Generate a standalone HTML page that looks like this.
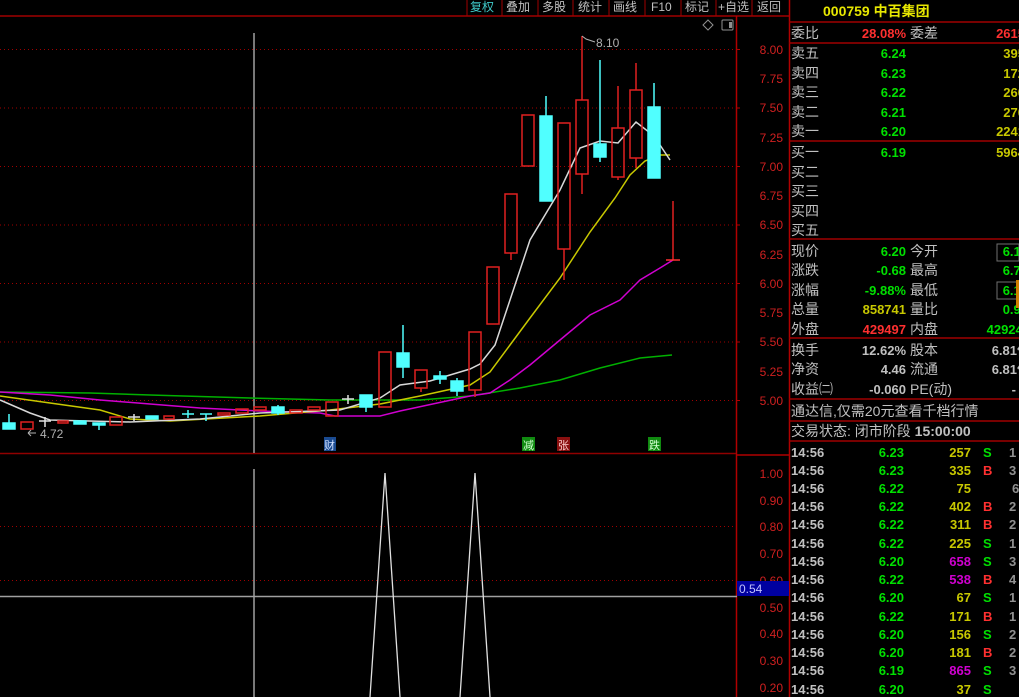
<!DOCTYPE html>
<html><head><meta charset="utf-8">
<style>
html,body{margin:0;padding:0;background:#000;}
body{width:1019px;height:697px;overflow:hidden;position:relative;font-family:"Liberation Sans","Noto Sans CJK SC",sans-serif;}
svg{position:absolute;left:0;top:0;}
svg text{font-family:"Liberation Sans","Noto Sans CJK SC",sans-serif;}
</style></head><body>
<svg width="1019" height="697" viewBox="0 0 1019 697" xmlns="http://www.w3.org/2000/svg">
<!-- top bar -->
<line x1="0" y1="16" x2="789" y2="16" stroke="#a00000" stroke-width="1.5"/>
<g font-size="12" fill="#c0c0c0">
<text x="470" y="11" fill="#3fc8c8">复权</text>
<text x="506" y="11">叠加</text>
<text x="542" y="11">多股</text>
<text x="578" y="11">统计</text>
<text x="613" y="11">画线</text>
<text x="651" y="11">F10</text>
<text x="685" y="11">标记</text>
<text x="718" y="11">+自选</text>
<text x="757" y="11">返回</text>
</g>
<g stroke="#a00000" stroke-width="1">
<line x1="467" y1="0" x2="467" y2="16"/><line x1="502" y1="0" x2="502" y2="16"/><line x1="538" y1="0" x2="538" y2="16"/><line x1="573" y1="0" x2="573" y2="16"/><line x1="609" y1="0" x2="609" y2="16"/><line x1="645" y1="0" x2="645" y2="16"/><line x1="681" y1="0" x2="681" y2="16"/><line x1="716" y1="0" x2="716" y2="16"/><line x1="752" y1="0" x2="752" y2="16"/>
</g>
<!-- icons -->
<path d="M708 20 L713 25 L708 30 L703 25 Z" fill="none" stroke="#909090" stroke-width="1"/>
<rect x="722" y="20" width="11" height="10" rx="1" fill="none" stroke="#909090"/>
<rect x="729" y="22" width="3" height="6" fill="#909090"/>
<!-- axes -->
<line x1="736.5" y1="16" x2="736.5" y2="697" stroke="#b00000" stroke-width="1.5"/>
<line x1="789.5" y1="0" x2="789.5" y2="697" stroke="#b00000" stroke-width="1.5"/>
<line x1="0" y1="453.5" x2="736" y2="453.5" stroke="#900000" stroke-width="1.5"/>
<line x1="736" y1="455" x2="789" y2="455" stroke="#b00000" stroke-width="1.5"/>
<!-- dotted grid -->
<g stroke="#a00000" stroke-width="1" stroke-dasharray="1,3">
<line x1="0" y1="49.5" x2="736" y2="49.5"/><line x1="0" y1="108" x2="736" y2="108"/><line x1="0" y1="166.5" x2="736" y2="166.5"/><line x1="0" y1="225" x2="736" y2="225"/><line x1="0" y1="283.5" x2="736" y2="283.5"/><line x1="0" y1="342" x2="736" y2="342"/><line x1="0" y1="400.5" x2="736" y2="400.5"/>
<line x1="0" y1="526.5" x2="736" y2="526.5"/><line x1="0" y1="580.5" x2="736" y2="580.5"/>
</g>
<!-- axis labels -->
<g font-size="12" fill="#d02020" text-anchor="end">
<text x="783" y="54">8.00</text><text x="783" y="83">7.75</text><text x="783" y="112">7.50</text><text x="783" y="142">7.25</text><text x="783" y="171">7.00</text><text x="783" y="200">6.75</text><text x="783" y="229">6.50</text><text x="783" y="259">6.25</text><text x="783" y="288">6.00</text><text x="783" y="317">5.75</text><text x="783" y="346">5.50</text><text x="783" y="376">5.25</text><text x="783" y="405">5.00</text>
<text x="783" y="478">1.00</text><text x="783" y="505">0.90</text><text x="783" y="531">0.80</text><text x="783" y="558">0.70</text><text x="783" y="585">0.60</text><text x="783" y="612">0.50</text><text x="783" y="638">0.40</text><text x="783" y="665">0.30</text><text x="783" y="692">0.20</text>
</g>
<g stroke="#b00000">
<line x1="736" y1="49.5" x2="740" y2="49.5"/><line x1="736" y1="108" x2="740" y2="108"/><line x1="736" y1="166.5" x2="740" y2="166.5"/><line x1="736" y1="225" x2="740" y2="225"/><line x1="736" y1="283.5" x2="740" y2="283.5"/><line x1="736" y1="342" x2="740" y2="342"/><line x1="736" y1="400.5" x2="740" y2="400.5"/>
</g>
<rect x="737" y="581" width="52" height="15" fill="#0000a0"/>
<text x="739" y="593" font-size="12" fill="#c0c0ff">0.54</text>
<line x1="0" y1="596.5" x2="737" y2="596.5" stroke="#a0a0a0" stroke-width="1.5"/>
<!-- vertical cursor -->
<line x1="254" y1="33" x2="254" y2="453" stroke="#a0a0a0" stroke-width="1.5"/>
<line x1="254" y1="469" x2="254" y2="697" stroke="#a0a0a0" stroke-width="1.5"/>
<!-- MAs -->
<polyline fill="none" stroke="#00b000" stroke-width="1.5" points="0,392 90,393 150,395 250,398 330,400 420,400 470,396 520,388 560,380 600,368 640,358 672,355"/>
<polyline fill="none" stroke="#d000d0" stroke-width="1.5" points="0,392 50,395 100,400 150,404 200,408 260,411 320,413 335,416 380,416 400,411 470,396 490,393 510,380 530,365 560,340 590,315 620,300 640,280 660,268 673,260"/>
<polyline fill="none" stroke="#c8c800" stroke-width="1.5" points="0,396 50,403 100,410 130,419 170,421 260,416 330,410 380,404 420,396 470,385 490,372 510,345 530,318 560,278 590,232 615,198 630,175 645,161 660,155 670,155"/>
<polyline fill="none" stroke="#d8d8d8" stroke-width="1.5" points="0,400 30,413 50,420 130,422 200,419 260,413 340,410 380,398 400,385 430,381 470,369 480,364 495,345 510,300 530,240 560,190 580,148 600,141 618,143 636,122 654,136 670,160"/>
<!-- candles: red hollow -->
<g fill="none" stroke="#e02020" stroke-width="1.5">
<rect x="21" y="422" width="12" height="7"/>
<rect x="58" y="421" width="10" height="2"/>
<rect x="110" y="417" width="12" height="8"/>
<rect x="164" y="416" width="10" height="3"/>
<rect x="218" y="413" width="12" height="2"/>
<rect x="236" y="409" width="12" height="4"/>
<rect x="254" y="407" width="12" height="3"/>
<rect x="290" y="410" width="12" height="3"/>
<rect x="308" y="407" width="12" height="3"/>
<rect x="326" y="402" width="12" height="14"/>
<rect x="379" y="352" width="12" height="55"/>
<rect x="415" y="370" width="12" height="18"/>
<rect x="469" y="332" width="12" height="58"/>
<rect x="487" y="267" width="12" height="57"/>
<rect x="505" y="194" width="12" height="59"/>
<rect x="522" y="115" width="12" height="51"/>
<rect x="558" y="123" width="12" height="126"/>
<rect x="576" y="100" width="12" height="74"/>
<rect x="612" y="128" width="12" height="49"/>
<rect x="630" y="90" width="12" height="68"/>
</g>
<g stroke="#e02020" stroke-width="1.5">
<line x1="421" y1="388" x2="421" y2="392"/>
<line x1="475" y1="390" x2="475" y2="397"/>
<line x1="511" y1="253" x2="511" y2="260"/>
<line x1="564" y1="249" x2="564" y2="280"/>
<line x1="582" y1="36" x2="582" y2="100"/><line x1="582" y1="174" x2="582" y2="194"/>
<line x1="618" y1="86" x2="618" y2="128"/><line x1="618" y1="177" x2="618" y2="180"/>
<line x1="636" y1="63" x2="636" y2="90"/><line x1="636" y1="158" x2="636" y2="168"/>
<line x1="673" y1="201" x2="673" y2="260"/>
<line x1="666" y1="260" x2="680" y2="260" stroke="#ff3030"/>
</g>
<!-- cyan candles -->
<g fill="#50ffff" stroke="#50ffff" stroke-width="1.5">
<rect x="3" y="423" width="12" height="6"/><line x1="9" y1="414" x2="9" y2="423"/>
<rect x="74" y="421" width="12" height="3"/>
<rect x="93" y="423" width="12" height="2"/><line x1="99" y1="425" x2="99" y2="430"/>
<rect x="146" y="416" width="12" height="3"/>
<line x1="182" y1="414" x2="194" y2="414"/><line x1="188" y1="410" x2="188" y2="418"/>
<line x1="200" y1="414" x2="212" y2="414"/><line x1="206" y1="414" x2="206" y2="421"/>
<rect x="272" y="407" width="12" height="6"/><line x1="278" y1="405" x2="278" y2="415"/>
<rect x="360" y="395" width="12" height="12"/><line x1="366" y1="407" x2="366" y2="412"/>
<rect x="397" y="353" width="12" height="14"/><line x1="403" y1="325" x2="403" y2="378"/>
<rect x="434" y="376" width="12" height="3"/><line x1="440" y1="371" x2="440" y2="384"/>
<rect x="451" y="381" width="12" height="10"/><line x1="457" y1="378" x2="457" y2="396"/>
<rect x="540" y="116" width="12" height="85"/><line x1="546" y1="96" x2="546" y2="116"/>
<rect x="594" y="144" width="12" height="13"/><line x1="600" y1="60" x2="600" y2="162"/>
<rect x="648" y="107" width="12" height="71"/><line x1="654" y1="83" x2="654" y2="107"/>
</g>
<!-- white doji -->
<g stroke="#e0e0e0" stroke-width="1.5">
<line x1="39" y1="421" x2="51" y2="421"/><line x1="45" y1="417" x2="45" y2="427"/>
<line x1="128" y1="417" x2="140" y2="417"/><line x1="134" y1="414" x2="134" y2="421"/>
<line x1="342" y1="399" x2="354" y2="399"/><line x1="348" y1="395" x2="348" y2="404"/>
</g>
<!-- annotations -->
<path d="M582 36 L586 39 L595 42" fill="none" stroke="#b0b0b0"/>
<text x="596" y="47" font-size="12" fill="#b0b0b0">8.10</text>
<path d="M36 433 L28 433 M28 433 L31 430 M28 433 L31 436" fill="none" stroke="#b0b0b0"/>
<text x="40" y="438" font-size="12" fill="#b0b0b0">4.72</text>
<!-- badges -->
<rect x="324" y="437" width="12" height="14" fill="#1a4a90"/><text x="324" y="449" font-size="11" fill="#d0e0ff">财</text>
<rect x="522" y="437" width="13" height="14" fill="#108a10"/><text x="523" y="449" font-size="11" fill="#d0ffd0">减</text>
<rect x="557" y="437" width="13" height="14" fill="#8a1010"/><text x="558" y="449" font-size="11" fill="#ffd0d0">张</text>
<rect x="648" y="437" width="13" height="14" fill="#108a10"/><text x="649" y="449" font-size="11" fill="#d0ffd0">跌</text>
<!-- lower indicator -->
<polyline fill="none" stroke="#e0e0e0" stroke-width="1.3" points="370,697 385,473 400,697"/>
<polyline fill="none" stroke="#e0e0e0" stroke-width="1.3" points="460,697 475,473 490,697"/>

<!-- right panel -->
<g stroke="#a00000" stroke-width="1.5">
<line x1="789" y1="22" x2="1019" y2="22"/><line x1="789" y1="43" x2="1019" y2="43"/><line x1="789" y1="141" x2="1019" y2="141"/><line x1="789" y1="239" x2="1019" y2="239"/><line x1="789" y1="338" x2="1019" y2="338"/><line x1="789" y1="399" x2="1019" y2="399"/><line x1="789" y1="421" x2="1019" y2="421"/><line x1="789" y1="441" x2="1019" y2="441"/>
</g>
<text x="823" y="16" font-size="14" font-weight="bold" fill="#e8e800">000759 中百集团</text>
<g font-size="14" fill="#c0c0c0">
<text x="791" y="38">委比</text><text x="910" y="38">委差</text>
<text x="791" y="58">卖五</text><text x="791" y="78">卖四</text><text x="791" y="97">卖三</text><text x="791" y="117">卖二</text><text x="791" y="136">卖一</text>
<text x="791" y="157">买一</text><text x="791" y="177">买二</text><text x="791" y="196">买三</text><text x="791" y="216">买四</text><text x="791" y="235">买五</text>
<text x="791" y="256">现价</text><text x="910" y="256">今开</text>
<text x="791" y="275">涨跌</text><text x="910" y="275">最高</text>
<text x="791" y="295">涨幅</text><text x="910" y="295">最低</text>
<text x="791" y="314">总量</text><text x="910" y="314">量比</text>
<text x="791" y="334">外盘</text><text x="910" y="334">内盘</text>
<text x="791" y="355">换手</text><text x="910" y="355">股本</text>
<text x="791" y="374">净资</text><text x="910" y="374">流通</text>
<text x="791" y="394">收益㈡</text><text x="910" y="394">PE(动)</text>
<text x="791" y="416">通达信,仅需20元查看千档行情</text>
<text x="791" y="436">交易状态: 闭市阶段 <tspan font-weight="bold">15:00:00</tspan></text>
</g>
<g font-size="13" font-weight="bold" text-anchor="end">
<text x="906" y="38" fill="#ff3030">28.08%</text><text x="1025" y="38" fill="#ff3030">2615</text>
<text x="906" y="58" fill="#00e000">6.24</text><text x="1025" y="58" fill="#c8c800">395</text>
<text x="906" y="78" fill="#00e000">6.23</text><text x="1025" y="78" fill="#c8c800">172</text>
<text x="906" y="97" fill="#00e000">6.22</text><text x="1025" y="97" fill="#c8c800">260</text>
<text x="906" y="117" fill="#00e000">6.21</text><text x="1025" y="117" fill="#c8c800">270</text>
<text x="906" y="136" fill="#00e000">6.20</text><text x="1025" y="136" fill="#c8c800">2241</text>
<text x="906" y="157" fill="#00e000">6.19</text><text x="1025" y="157" fill="#c8c800">5964</text>
<text x="906" y="256" fill="#00e000">6.20</text><text x="1028" y="256" fill="#00e000">6.19</text>
<text x="906" y="275" fill="#00e000">-0.68</text><text x="1028" y="275" fill="#00e000">6.71</text>
<text x="906" y="295" fill="#00e000">-9.88%</text><text x="1028" y="295" fill="#00e000">6.19</text>
<text x="906" y="314" fill="#c8c800">858741</text><text x="1028" y="314" fill="#00e000">0.93</text>
<text x="906" y="334" fill="#ff3030">429497</text><text x="1030" y="334" fill="#00e000">429244</text>
<text x="906" y="355" fill="#c0c0c0">12.62%</text><text x="1030" y="355" fill="#c0c0c0">6.81亿</text>
<text x="906" y="374" fill="#c0c0c0">4.46</text><text x="1030" y="374" fill="#c0c0c0">6.81亿</text>
<text x="906" y="394" fill="#c0c0c0">-0.060</text><text x="1016" y="394" fill="#c0c0c0">-</text>
</g>
<rect x="997" y="244" width="22" height="17" fill="none" stroke="#707070"/>
<rect x="997" y="282" width="22" height="17" fill="none" stroke="#707070"/>
<rect x="1016" y="280" width="3" height="28" fill="#d08000"/>
<!-- ticks -->
<g font-size="13" font-weight="bold">
<g fill="#c0c0c0">
<text x="791" y="457">14:56</text><text x="791" y="475">14:56</text><text x="791" y="493">14:56</text><text x="791" y="511">14:56</text><text x="791" y="529">14:56</text><text x="791" y="548">14:56</text><text x="791" y="566">14:56</text><text x="791" y="584">14:56</text><text x="791" y="602">14:56</text><text x="791" y="621">14:56</text><text x="791" y="639">14:56</text><text x="791" y="657">14:56</text><text x="791" y="675">14:56</text><text x="791" y="694">14:56</text>
</g>
<g fill="#00e000" text-anchor="end">
<text x="904" y="457">6.23</text><text x="904" y="475">6.23</text><text x="904" y="493">6.22</text><text x="904" y="511">6.22</text><text x="904" y="529">6.22</text><text x="904" y="548">6.22</text><text x="904" y="566">6.20</text><text x="904" y="584">6.22</text><text x="904" y="602">6.20</text><text x="904" y="621">6.22</text><text x="904" y="639">6.20</text><text x="904" y="657">6.20</text><text x="904" y="675">6.19</text><text x="904" y="694">6.20</text>
</g>
<g fill="#c8c800" text-anchor="end">
<text x="971" y="457">257</text><text x="971" y="475">335</text><text x="971" y="493">75</text><text x="971" y="511">402</text><text x="971" y="529">311</text><text x="971" y="548">225</text><text x="971" y="566" fill="#d000d0">658</text><text x="971" y="584" fill="#d000d0">538</text><text x="971" y="602">67</text><text x="971" y="621">171</text><text x="971" y="639">156</text><text x="971" y="657">181</text><text x="971" y="675" fill="#d000d0">865</text><text x="971" y="694">37</text>
</g>
<text x="983" y="457" fill="#00e000">S</text><text x="983" y="475" fill="#ff3030">B</text><text x="983" y="511" fill="#ff3030">B</text><text x="983" y="529" fill="#ff3030">B</text><text x="983" y="548" fill="#00e000">S</text><text x="983" y="566" fill="#00e000">S</text><text x="983" y="584" fill="#ff3030">B</text><text x="983" y="602" fill="#00e000">S</text><text x="983" y="621" fill="#ff3030">B</text><text x="983" y="639" fill="#00e000">S</text><text x="983" y="657" fill="#ff3030">B</text><text x="983" y="675" fill="#00e000">S</text><text x="983" y="694" fill="#00e000">S</text>
<g fill="#909090">
<text x="1009" y="457">1</text><text x="1009" y="475">3</text><text x="1012" y="493">6</text><text x="1009" y="511">2</text><text x="1009" y="529">2</text><text x="1009" y="548">1</text><text x="1009" y="566">3</text><text x="1009" y="584">4</text><text x="1009" y="602">1</text><text x="1009" y="621">1</text><text x="1009" y="639">2</text><text x="1009" y="657">2</text><text x="1009" y="675">3</text>
</g>
</g>
</svg>
</body></html>
